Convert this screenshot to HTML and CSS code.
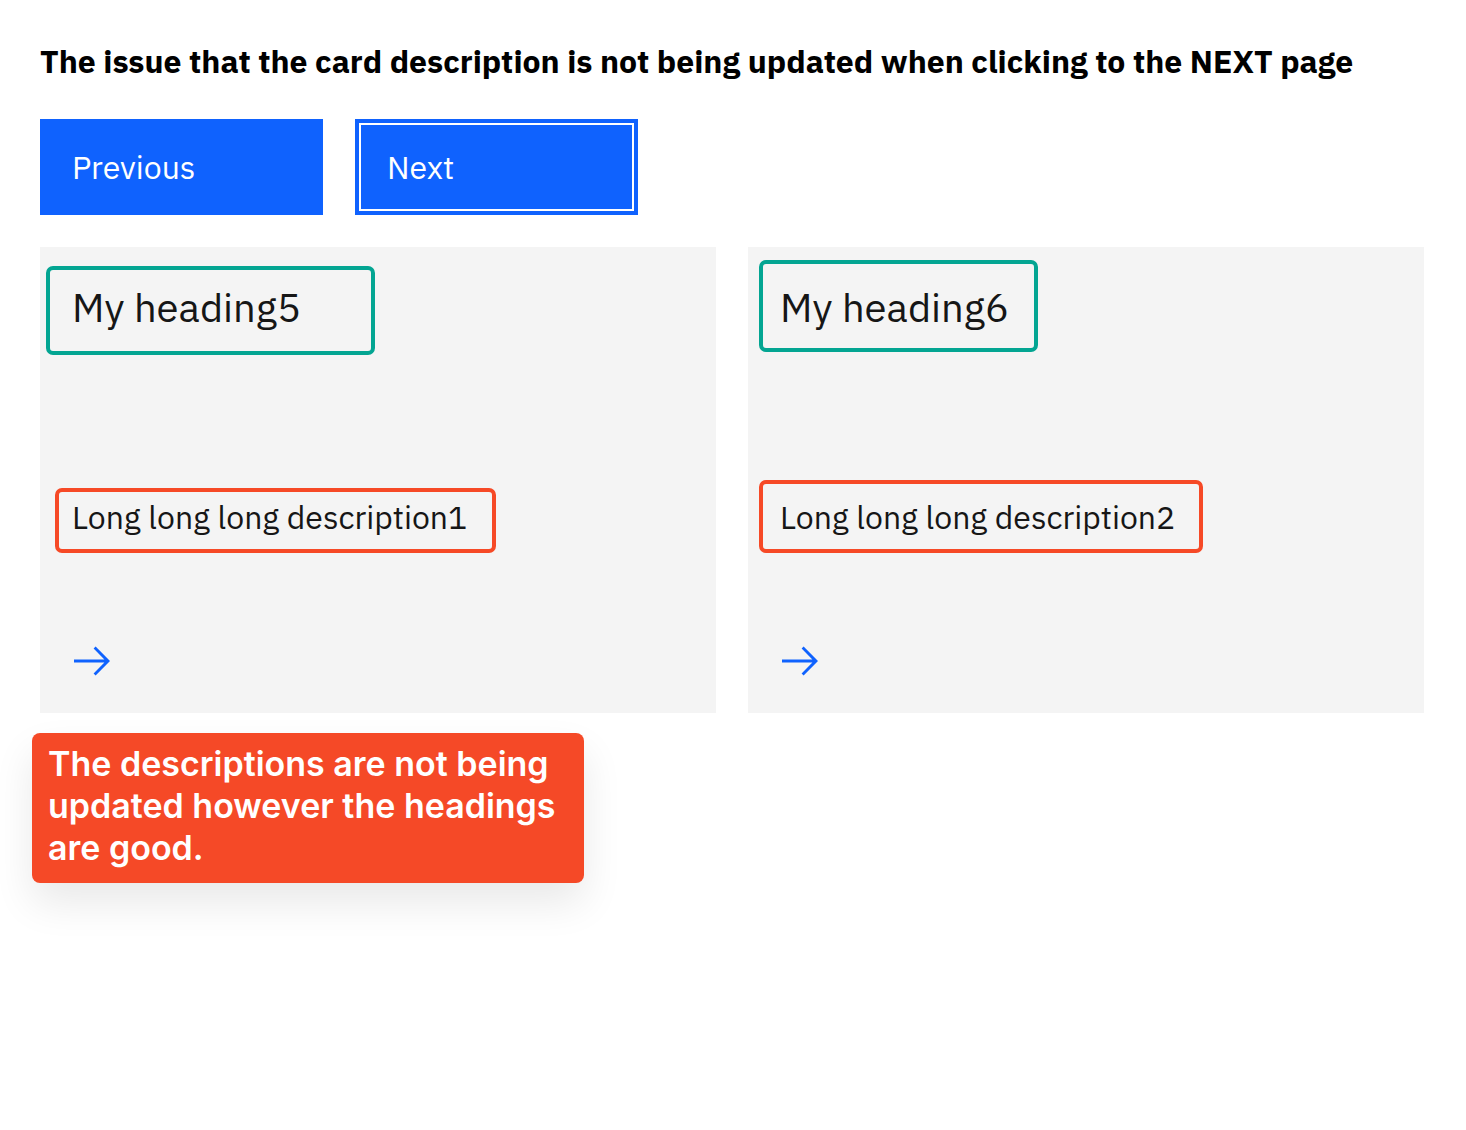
FILE: index.html
```html
<!DOCTYPE html>
<html lang="en">
<head>
<meta charset="utf-8">
<meta name="viewport" content="width=device-width, initial-scale=1">
<title>Card description</title>
<link rel="stylesheet" href="styles.css">
</head>
<body>
<main class="page">
  <h1 class="title">The issue that the card description is not being updated when clicking to the NEXT page</h1>
  <div class="actions">
    <button class="btn" type="button">Previous</button>
    <button class="btn btn-focused" type="button">Next</button>
  </div>
  <section class="cards">
    <article class="card">
      <h2 class="heading">My heading5<span class="mark mark-good mark-heading"></span></h2>
      <p class="description">Long long long description1<span class="mark mark-bad mark-description"></span></p>
      <a class="arrow" href="#" aria-label="Open card 5">
        <svg viewBox="0 0 20 20" width="40" height="40"><path d="M11.8 2.8 10.8 3.8 16.2 9.3H1v1.4h15.2l-5.4 5.5 1 1L19 10z" fill="currentColor"/></svg>
      </a>
    </article>
    <article class="card">
      <h2 class="heading">My heading6<span class="mark mark-good mark-heading-next"></span></h2>
      <p class="description">Long long long description2<span class="mark mark-bad mark-description-next"></span></p>
      <a class="arrow" href="#" aria-label="Open card 6">
        <svg viewBox="0 0 20 20" width="40" height="40"><path d="M11.8 2.8 10.8 3.8 16.2 9.3H1v1.4h15.2l-5.4 5.5 1 1L19 10z" fill="currentColor"/></svg>
      </a>
    </article>
  </section>
  <aside class="note">The descriptions are not being updated however the headings are good.</aside>
</main>
</body>
</html>
```

FILE: styles.css
```css
* {
  box-sizing: border-box;
}

body {
  margin: 0;
  background: #fff;
  color: #161616;
  font-family: "IBM Plex Sans", "Noto Sans", sans-serif;
}

.page {
  min-height: 100vh;
  padding: 40px 42px 40px 40px;
}

.title {
  margin: 0 0 37px;
  color: #000;
  font-size: 32px;
  font-weight: 700;
  line-height: 42px;
}

.actions {
  display: flex;
  gap: 32px;
  margin-bottom: 32px;
}

.btn {
  width: 283px;
  height: 96px;
  padding: 0 28px;
  border: 4px solid #0f62fe;
  border-radius: 0;
  background: #0f62fe;
  color: #fff;
  font-family: inherit;
  font-size: 32px;
  text-align: left;
}

.btn-focused {
  box-shadow: inset 0 0 0 2px #fff;
}

.cards {
  display: grid;
  grid-template-columns: 1fr 1fr;
  gap: 32px;
}

.card {
  display: flex;
  flex-direction: column;
  align-items: flex-start;
  padding: 32px;
  background: #f4f4f4;
}

.heading,
.description {
  position: relative;
  margin: 0;
  font-weight: 400;
  white-space: nowrap;
}

.heading {
  margin-bottom: 158px;
  font-size: 40px;
  line-height: 56px;
}

.description {
  margin-bottom: 100px;
  font-size: 32px;
  line-height: 48px;
}

.arrow {
  display: flex;
  color: #0f62fe;
}

.mark {
  position: absolute;
  border: 4px solid;
  border-radius: 7px;
}

.mark-good {
  border-color: #03a592;
}

.mark-bad {
  border-color: #f64926;
}

.mark-heading {
  top: -13px;
  left: -26px;
  width: 329px;
  height: 89px;
}

.mark-heading-next {
  top: -19px;
  left: -21px;
  width: 279px;
  height: 92px;
}

.mark-description {
  top: -5px;
  left: -17px;
  width: 441px;
  height: 65px;
}

.mark-description-next {
  top: -13px;
  left: -21px;
  width: 444px;
  height: 73px;
}

.note {
  max-width: 552px;
  margin: 20px 0 0 -8px;
  padding: 10px 16px 14px;
  border-radius: 8px;
  background: #f54927;
  box-shadow: 0 20px 40px rgba(0, 0, 0, 0.09);
  color: #fff;
  font-family: Inter, sans-serif;
  font-size: 34px;
  font-weight: 600;
  line-height: 42px;
}
```
